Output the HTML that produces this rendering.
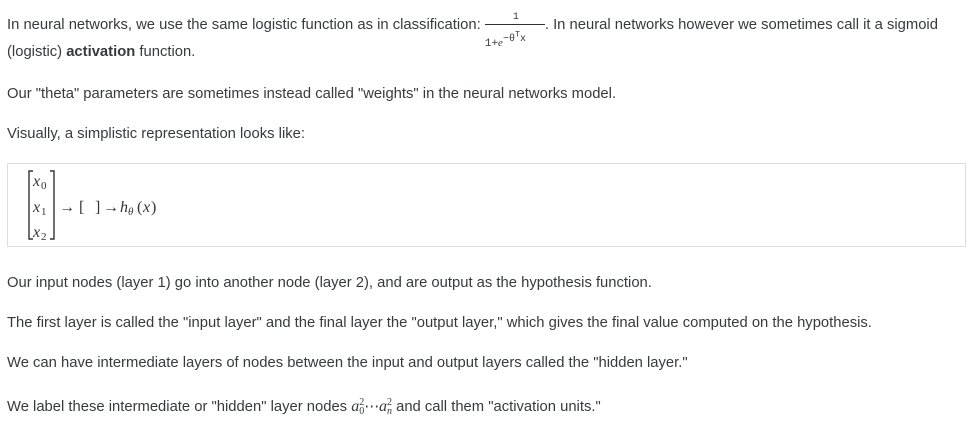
<!DOCTYPE html>
<html><head><style>
body{margin:0;width:974px;height:429px;background:#fff;font-family:"Liberation Sans",sans-serif;font-size:14.8px;color:#373a3c;position:relative;overflow:hidden}
.l{position:absolute;left:7px;white-space:nowrap;line-height:20px}
.m{font-family:"Liberation Serif",serif;font-style:italic}
.box{position:absolute;left:7px;top:163px;width:959px;height:84px;border:1px solid #ddd;box-sizing:border-box}
</style></head><body>
<div class="l" style="top:15px">In neural networks, we use the same logistic function as in classification: <span style="display:inline-block;position:relative;width:60px;height:20px;vertical-align:middle"><span style="position:absolute;left:28px;top:-7px;font-size:10px;font-family:'Liberation Mono',monospace">1</span><span style="position:absolute;left:0;top:9px;width:60px;border-top:1px solid #333"></span><span style="position:absolute;left:0;top:10px;font-size:11px;font-family:'Liberation Mono',monospace">1+<span class="m">e</span><sup style="font-size:10px">−θ<sup>T</sup>x</sup></span></span>. In neural networks however we sometimes call it a sigmoid</div>
<div class="l" style="top:42px">(logistic) <b>activation</b> function.</div>
<div class="l" style="top:84px">Our "theta" parameters are sometimes instead called "weights" in the neural networks model.</div>
<div class="l" style="top:124px">Visually, a simplistic representation looks like:</div>
<div class="box">
<svg width="300" height="82" style="position:absolute;left:0;top:0" font-family="Liberation Serif" font-size="16" fill="#333">
<path d="M25 7h-4v68h4M42 7h4v68h-4" stroke="#333" fill="none" stroke-width="1.4"/>
<text x="25" y="22" font-style="italic">x</text><text x="33" y="25" font-size="11">0</text>
<text x="25" y="48" font-style="italic">x</text><text x="33" y="51" font-size="11">1</text>
<text x="25" y="73" font-style="italic">x</text><text x="33" y="76" font-size="11">2</text>
<text x="51" y="48">→</text><text x="71" y="48">[</text><text x="87" y="48">]</text><text x="95" y="48">→</text>
<text x="112" y="48" font-style="italic">h</text><text x="120" y="51" font-size="11" font-style="italic">θ</text><text x="129" y="48">(</text><text x="135" y="48" font-style="italic">x</text><text x="143" y="48">)</text>
</svg></div>
<div class="l" style="top:273px">Our input nodes (layer 1) go into another node (layer 2), and are output as the hypothesis function.</div>
<div class="l" style="top:313px">The first layer is called the "input layer" and the final layer the "output layer," which gives the final value computed on the hypothesis.</div>
<div class="l" style="top:353px">We can have intermediate layers of nodes between the input and output layers called the "hidden layer."</div>
<div class="l" style="top:397px">We label these intermediate or "hidden" layer nodes <span class="m" style="font-size:16px">a</span><span style="display:inline-block;font-size:10px;line-height:9px;vertical-align:-3px;font-family:'Liberation Serif',serif">2<br>0</span>⋯<span class="m" style="font-size:16px">a</span><span style="display:inline-block;font-size:10px;line-height:9px;vertical-align:-3px;font-family:'Liberation Serif',serif">2<br><i>n</i></span> and call them "activation units."</div>
</body></html>
